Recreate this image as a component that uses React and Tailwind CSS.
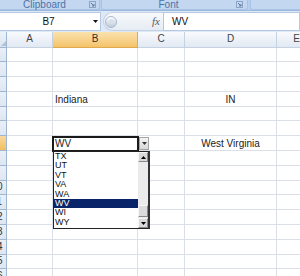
import React from "react";

const cols = [
  { k: "A", w: "w-[46px]" },
  { k: "B", w: "w-[85px]" },
  { k: "C", w: "w-[47px]" },
  { k: "D", w: "w-[92px]" },
  { k: "E", w: "w-[40px]" },
];

const rowData = {
  4: { B: "Indiana", D: "IN" },
  7: { B: "WV", D: "West Virginia" },
};

const items = ["TX", "UT", "VT", "VA", "WA", "WV", "WI", "WY"];

function Launcher() {
  return (
    <svg width="7" height="7" viewBox="0 0 7 7" className="block">
      <rect x="0.5" y="0.5" width="6" height="6" fill="none" stroke="#8ea4c4" strokeWidth="1" />
      <path d="M2 2 L5 5 M5 3 L5 5 L3 5" stroke="#5f7799" strokeWidth="1" fill="none" />
    </svg>
  );
}

function Row({ n }) {
  const data = rowData[n] || {};
  const active = n === 7;
  return (
    <div className="flex h-[14.8px]">
      <div
        className={
          active
            ? "w-[7px] shrink-0 overflow-hidden border-r border-b border-[#9eb6ce] bg-linear-to-b from-[#f9d99f] to-[#f1c05e] flex items-end"
            : "w-[7px] shrink-0 overflow-hidden border-r border-b border-[#9eb6ce] bg-linear-to-b from-[#eaf0f8] to-[#dde6f2] flex items-end"
        }
      >
        <div className="w-[26px] ml-[-16px] shrink-0 text-center text-[10px] leading-none pb-[2px] text-[#333]">
          {n}
        </div>
      </div>
      {cols.map((c) => {
        const v = data[c.k];
        const center = c.k === "D";
        return (
          <div
            key={c.k}
            className={
              c.w +
              " shrink-0 border-r border-b border-[#dadfe8] flex items-end pb-[1px] text-[10px] leading-none text-[#222] overflow-hidden whitespace-nowrap " +
              (center ? "justify-center" : "pl-[2px]")
            }
          >
            {v}
          </div>
        );
      })}
    </div>
  );
}

export default function App() {
  const rows = [];
  for (let i = 1; i <= 16; i++) rows.push(i);
  return (
    <div className="w-[300px] h-[276px] overflow-hidden bg-white relative font-['Liberation_Sans',Arial,sans-serif]">
      {/* Ribbon labels */}
      <div className="h-[10px] flex bg-[#b6cfee]">
        <div className="w-[100px] shrink-0 bg-[#c3d8f0] border-r border-b border-[#a9c3e4] rounded-br-[3px] flex items-center">
          <div className="flex-1 text-center text-[10px] leading-none text-[#4f70a6] pl-[4px]">Clipboard</div>
          <div className="w-[14px] flex items-center justify-center">
            <Launcher />
          </div>
        </div>
        <div className="w-[1px] shrink-0" />
        <div className="w-[147px] shrink-0 bg-[#c3d8f0] border-l border-r border-b border-[#a9c3e4] rounded-b-[3px] flex items-center">
          <div className="flex-1 text-center text-[10px] leading-none text-[#4f70a6] pl-[4px]">Font</div>
          <div className="w-[16px] flex items-center justify-center">
            <Launcher />
          </div>
        </div>
        <div className="w-[2px] shrink-0" />
        <div className="flex-1 bg-[#c3d8f0] border-l border-b border-[#a9c3e4] rounded-bl-[3px]" />
      </div>
      <div className="h-[1px] bg-[#9bb7de]" />
      {/* Formula bar */}
      <div className="h-[21px] bg-[#dfe8f5] flex items-center">
        <div className="w-[101px] h-[19px] shrink-0 bg-white border-y border-r border-[#b5c8e2] flex items-center">
          <div className="flex-1 text-center text-[10px] leading-none text-[#111] pl-[4px]">B7</div>
          <svg width="5" height="3" viewBox="0 0 5 3" className="mr-[2px] block">
            <path d="M0 0 L5 0 L2.5 3 Z" fill="#111" />
          </svg>
        </div>
        <div className="w-[2px] shrink-0" />
        <div className="w-[60px] h-[19px] shrink-0 flex items-center rounded-l-full bg-linear-to-b from-[#f7f9fc] to-[#e6ecf4] border-y border-l border-[#c3d1e4]">
          <div className="w-[12px] h-[12px] ml-[1px] rounded-full bg-linear-to-b from-[#ffffff] to-[#bccadb] border border-[#a9b8cc] flex items-center justify-center">
            <div className="w-[5px] h-[5px] rounded-full bg-[#d7e0ec]" />
          </div>
          <div className="flex-1" />
          <span className="italic font-['Liberation_Serif',serif] text-[11px] leading-none text-[#5a5a5a] mr-[3px]">fx</span>
        </div>
        <div className="flex-1 h-[19px] bg-white border border-[#b5c8e2] flex items-center pl-[8px] text-[10px] leading-none text-[#111]">
          WV
        </div>
      </div>
      {/* Column headers */}
      <div className="flex h-[15.5px]">
        <div className="w-[7px] shrink-0 border-r border-b border-[#9eb6ce] bg-linear-to-b from-[#eef3f9] to-[#dbe4f0] flex items-end justify-end">
          <svg width="5" height="5" viewBox="0 0 5 5" className="block mb-[1px]">
            <path d="M5 0 L5 5 L0 5 Z" fill="#b3c2d6" />
          </svg>
        </div>
        {cols.map((c) => (
          <div
            key={c.k}
            className={
              c.w +
              (c.k === "B"
                ? " shrink-0 border-r border-b border-[#e0a94c] bg-linear-to-b from-[#fbe2ad] to-[#f4c36a] flex items-center justify-center text-[10px] leading-none text-[#333]"
                : " shrink-0 border-r border-b border-[#c5d2e2] bg-linear-to-b from-[#f8fafd] to-[#e2e9f3] flex items-center justify-center text-[10px] leading-none text-[#444]")
            }
          >
            {c.k}
          </div>
        ))}
      </div>
      {/* Rows */}
      <div className="flex flex-col">
        {rows.map((n) => (
          <Row key={n} n={n} />
        ))}
      </div>

      {/* Active cell border */}
      <div className="absolute left-[52px] top-[135.5px] w-[87px] h-[16px] border-2 border-[#1a1a1a]" />
      {/* Cell dropdown button */}
      <div className="absolute left-[139px] top-[137px] w-[10px] h-[13px] bg-linear-to-b from-[#f4f4f4] to-[#d8d8d8] border border-[#a5a5a5] flex items-center justify-center">
        <svg width="5" height="3" viewBox="0 0 5 3" className="block">
          <path d="M0 0 L5 0 L2.5 3 Z" fill="#333" />
        </svg>
      </div>
      {/* Dropdown list */}
      <div className="absolute left-[53px] top-[151px] w-[97px] h-[78px] bg-white border border-[#222] border-r-2 border-r-[#333] flex">
        <div className="w-[84px] shrink-0 flex flex-col">
          {items.map((t) => (
            <div
              key={t}
              className={
                t === "WV"
                  ? "h-[9.4px] shrink-0 bg-[#0a246a] text-white text-[9px] leading-[9.4px] pl-[1px]"
                  : "h-[9.4px] shrink-0 text-[#111] text-[9px] leading-[9.4px] pl-[1px]"
              }
            >
              {t}
            </div>
          ))}
        </div>
        <div className="flex-1 bg-[#ebebeb] flex flex-col">
          <div className="h-[10px] bg-[#d9d9d9] border border-[#f6f6f6] border-r-[#8a8a8a] border-b-[#8a8a8a] flex items-center justify-center">
            <svg width="5" height="3" viewBox="0 0 5 3" className="block">
              <path d="M0 3 L5 3 L2.5 0 Z" fill="#000" />
            </svg>
          </div>
          <div className="flex-1 flex flex-col justify-end">
            <div className="h-[12px] bg-[#dcdcdc] border border-[#f6f6f6] border-r-[#8a8a8a] border-b-[#8a8a8a] mb-[1px]" />
          </div>
          <div className="h-[10px] bg-[#d9d9d9] border border-[#f6f6f6] border-r-[#8a8a8a] border-b-[#8a8a8a] flex items-center justify-center">
            <svg width="5" height="3" viewBox="0 0 5 3" className="block">
              <path d="M0 0 L5 0 L2.5 3 Z" fill="#000" />
            </svg>
          </div>
        </div>
      </div>
    </div>
  );
}
